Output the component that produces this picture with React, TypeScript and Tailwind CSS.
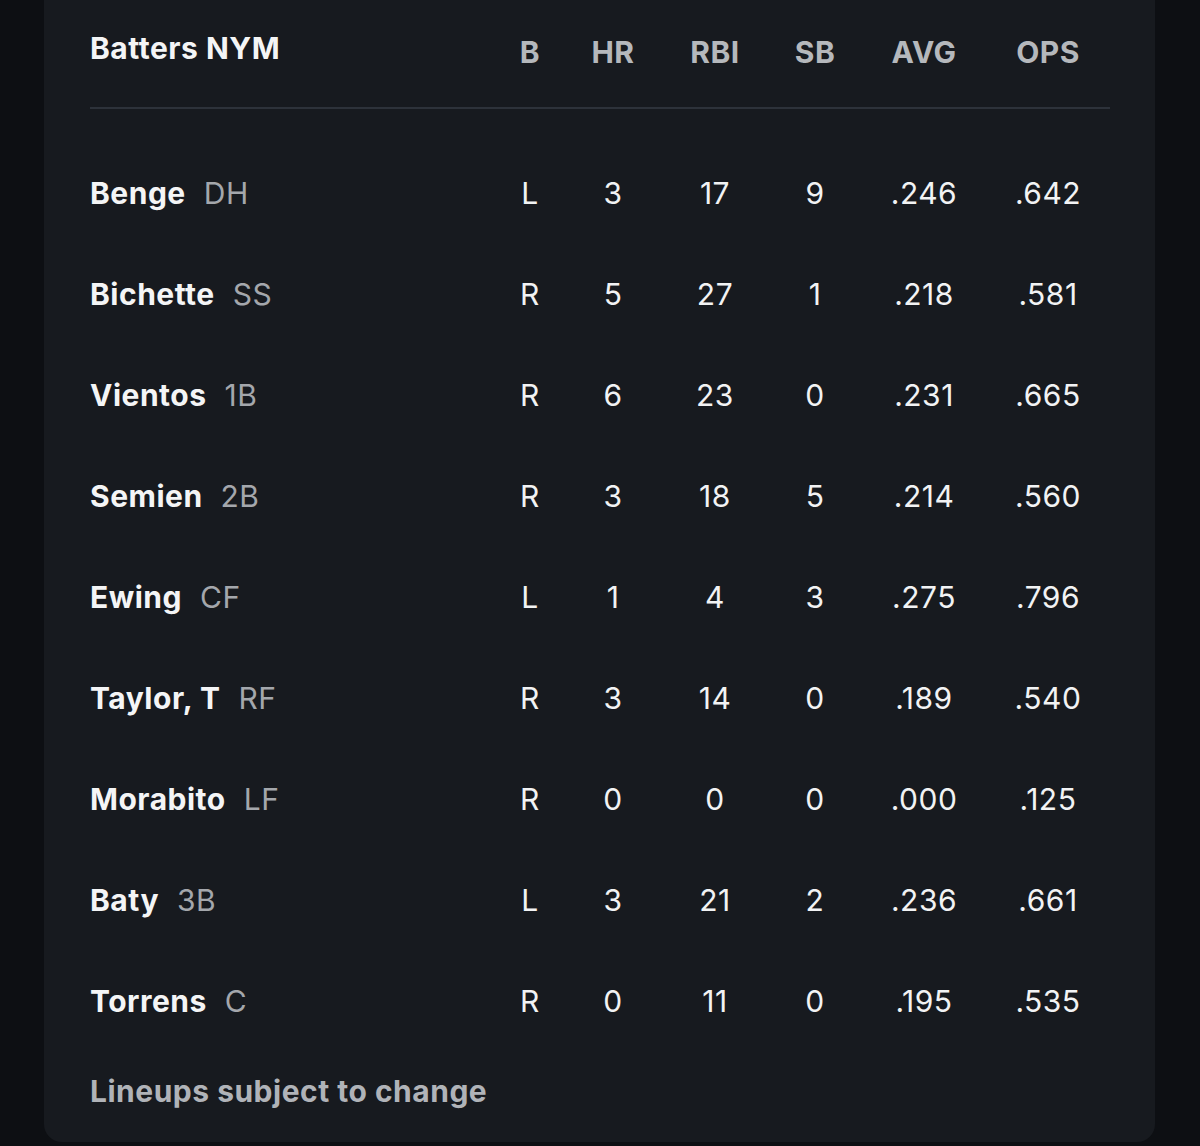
import React from 'react';

const rows = [
  { name: 'Benge', pos: 'DH', b: 'L', hr: '3', rbi: '17', sb: '9', avg: '.246', ops: '.642' },
  { name: 'Bichette', pos: 'SS', b: 'R', hr: '5', rbi: '27', sb: '1', avg: '.218', ops: '.581' },
  { name: 'Vientos', pos: '1B', b: 'R', hr: '6', rbi: '23', sb: '0', avg: '.231', ops: '.665' },
  { name: 'Semien', pos: '2B', b: 'R', hr: '3', rbi: '18', sb: '5', avg: '.214', ops: '.560' },
  { name: 'Ewing', pos: 'CF', b: 'L', hr: '1', rbi: '4', sb: '3', avg: '.275', ops: '.796' },
  { name: 'Taylor, T', pos: 'RF', b: 'R', hr: '3', rbi: '14', sb: '0', avg: '.189', ops: '.540' },
  { name: 'Morabito', pos: 'LF', b: 'R', hr: '0', rbi: '0', sb: '0', avg: '.000', ops: '.125' },
  { name: 'Baty', pos: '3B', b: 'L', hr: '3', rbi: '21', sb: '2', avg: '.236', ops: '.661' },
  { name: 'Torrens', pos: 'C', b: 'R', hr: '0', rbi: '11', sb: '0', avg: '.195', ops: '.535' },
];

const cols = 'grid grid-cols-[400px_80px_86px_118px_82px_136px_112px] items-center';

export default function App() {
  return (
    <div className="min-h-[1146px] bg-[#0d0f13] pl-[44px] pr-[45px] font-['Inter',sans-serif] text-[30px] leading-[36px] tracking-[0.5px]">
      <div className="bg-[#171a1f] rounded-b-[18px] pl-[46px] pr-[45px] pt-[30px] pb-[33px]">
        <div className={cols}>
          <div className="font-bold text-[#f4f5f6] pb-[4px]">Batters NYM</div>
          {['B', 'HR', 'RBI', 'SB', 'AVG', 'OPS'].map((h) => (
            <div key={h} className="text-center font-bold text-[#b5b8bc] pt-[4px]">
              {h}
            </div>
          ))}
        </div>

        <div className="mt-[37px] h-[2px] bg-[#2d323a]" />

        <div className="mt-[33px] flex flex-col">
          {rows.map((r) => (
            <div key={r.name} className={`${cols} h-[101px]`}>
              <div className="flex items-baseline">
                <span className="font-bold text-[#f4f5f6]">{r.name}</span>
                <span className="ml-[18px] text-[#a4a7ac]">{r.pos}</span>
              </div>
              <div className="text-center text-[#f2f3f4]">{r.b}</div>
              <div className="text-center text-[#f2f3f4]">{r.hr}</div>
              <div className="text-center text-[#f2f3f4]">{r.rbi}</div>
              <div className="text-center text-[#f2f3f4]">{r.sb}</div>
              <div className="text-center text-[#f2f3f4]">{r.avg}</div>
              <div className="text-center text-[#f2f3f4]">{r.ops}</div>
            </div>
          ))}
        </div>

        <div className="mt-[22px] font-bold text-[#b0b3b8]">Lineups subject to change</div>
      </div>
    </div>
  );
}
